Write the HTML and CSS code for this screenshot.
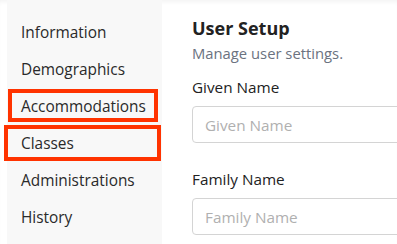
FILE: index.html
```html
<!DOCTYPE html>
<html lang="en">

<head>
    <meta charset="UTF-8">
    <title>User Setup</title>
    <link rel="stylesheet" href="styles.css">
</head>

<body>
    <div class="page">
        <nav class="sidebar">
            <a class="item">Information</a>
            <a class="item">Demographics</a>
            <a class="item mark mark-a">Accommodations</a>
            <a class="item mark mark-b">Classes</a>
            <a class="item">Administrations</a>
            <a class="item">History</a>
        </nav>
        <main class="content">
            <h1 class="title">User Setup</h1>
            <p class="subtitle">Manage user settings.</p>
            <div class="field">
                <label class="label">Given Name</label>
                <input class="input" type="text" placeholder="Given Name">
            </div>
            <div class="field">
                <label class="label">Family Name</label>
                <input class="input" type="text" placeholder="Family Name">
            </div>
        </main>
    </div>
</body>

</html>
```

FILE: styles.css
```css
body {
    margin: 0;
    padding: 0;
    background: #ffffff;
    font-family: 'Open Sans', sans-serif;
    color: #222222;
    overflow: hidden;
}

.page {
    display: flex;
    min-height: 244px;
    box-shadow: inset 0 4px 4px -2px rgba(0, 0, 0, 0.05);
}

.sidebar {
    flex-shrink: 0;
    display: flex;
    flex-direction: column;
    width: 155px;
    margin-left: 7px;
    padding-top: 14px;
    background: #f8f8f8;
}

.item {
    position: relative;
    display: flex;
    align-items: center;
    height: 37px;
    padding-left: 14px;
    font-size: 15.4px;
    color: #2a2a2a;
}

.mark::after {
    content: "";
    position: absolute;
    border: 4px solid #ff3300;
}

.mark-a::after {
    left: 1px;
    right: 4px;
    top: 1px;
    bottom: 3px;
}

.mark-b::after {
    left: -3px;
    right: 1px;
    top: 0;
    bottom: 1px;
}

.content {
    flex: 1;
    min-width: 0;
    overflow: hidden;
    padding: 16px 0 0 30px;
}

.title {
    margin: 0;
    font-size: 18px;
    font-weight: 700;
    line-height: 24px;
    color: #222222;
}

.subtitle {
    margin: 4px 0 0;
    font-size: 14.8px;
    line-height: 18px;
    color: #6b7280;
}

.field {
    display: flex;
    flex-direction: column;
}

.label {
    margin-top: 15px;
    font-size: 15.3px;
    line-height: 20px;
    color: #222222;
}

.input {
    margin-top: 9px;
    height: 37px;
    box-sizing: border-box;
    width: 260px;
    padding: 0 12px;
    border: 1px solid #d4d4d4;
    border-radius: 4px;
    font-family: inherit;
    font-size: 15.3px;
}

.input::placeholder {
    color: #b0b0b0;
}

.field + .field .label {
    margin-top: 26px;
}
```
